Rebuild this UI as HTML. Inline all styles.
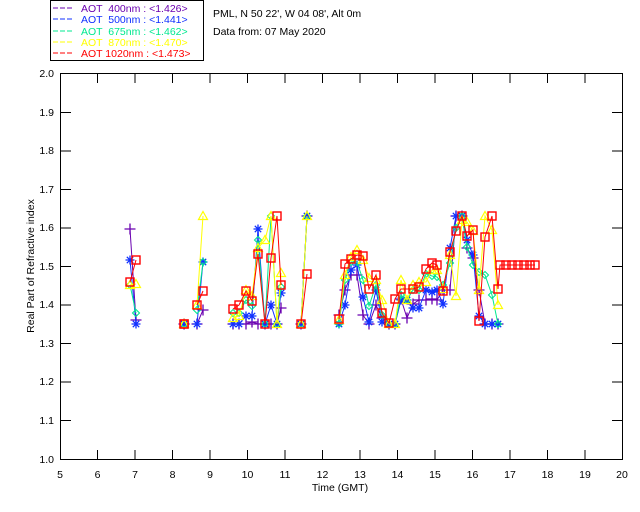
<!DOCTYPE html>
<html><head><meta charset="utf-8"><style>
html,body{margin:0;padding:0;background:#fff;}
svg{display:block;font-family:"Liberation Sans",sans-serif;}
</style></head><body>
<svg width="640" height="512" viewBox="0 0 640 512" xmlns="http://www.w3.org/2000/svg">
<defs>
<marker id="mr" markerUnits="userSpaceOnUse" markerWidth="12" markerHeight="12" refX="6" refY="6" overflow="visible"><rect x="2" y="2" width="8" height="8" fill="none" stroke="#f00" stroke-width="1.4"/></marker>
<marker id="mb" markerUnits="userSpaceOnUse" markerWidth="12" markerHeight="12" refX="6" refY="6" overflow="visible"><path d="M6 1.5V10.5M1.5 6H10.5M2.8 2.8L9.2 9.2M9.2 2.8L2.8 9.2" stroke="#1030ff" stroke-width="1.3"/></marker>
<marker id="mp" markerUnits="userSpaceOnUse" markerWidth="12" markerHeight="12" refX="6" refY="6" overflow="visible"><path d="M6 0.5V11.5M0.5 6H11.5" stroke="#6a00b0" stroke-width="1.3"/></marker>
<marker id="mg" markerUnits="userSpaceOnUse" markerWidth="12" markerHeight="12" refX="6" refY="6" overflow="visible"><path d="M6 2.5L9.5 6L6 9.5L2.5 6Z" fill="none" stroke="#00e890" stroke-width="1.1"/></marker>
<marker id="my" markerUnits="userSpaceOnUse" markerWidth="12" markerHeight="12" refX="6" refY="6" overflow="visible"><path d="M6 1.5L10.5 9.5H1.5Z" fill="none" stroke="#ff0" stroke-width="1.2"/></marker>
</defs>

<rect x="50.5" y="0.5" width="153" height="60" fill="#fff" stroke="#000"/>
<g font-size="10.5">
<line x1="53" y1="8" x2="74" y2="8" stroke="#6a00b0" stroke-dasharray="5,2"/><text x="81" y="12" fill="#6a00b0" xml:space="preserve">AOT  400nm : &lt;1.426&gt;</text>
<line x1="53" y1="19" x2="74" y2="19" stroke="#1030ff" stroke-dasharray="5,2"/><text x="81" y="23" fill="#1030ff" xml:space="preserve">AOT  500nm : &lt;1.441&gt;</text>
<line x1="53" y1="31" x2="74" y2="31" stroke="#00e890" stroke-dasharray="5,2"/><text x="81" y="35" fill="#00e890" xml:space="preserve">AOT  675nm : &lt;1.462&gt;</text>
<line x1="53" y1="42" x2="74" y2="42" stroke="#ff0" stroke-dasharray="5,2"/><text x="81" y="46" fill="#ff0" xml:space="preserve">AOT  870nm : &lt;1.470&gt;</text>
<line x1="53" y1="53" x2="74" y2="53" stroke="#f00" stroke-dasharray="5,2"/><text x="81" y="57" fill="#f00" xml:space="preserve">AOT 1020nm : &lt;1.473&gt;</text>
</g>
<text x="213" y="17" font-size="10.5">PML, N 50 22', W 04 08', Alt 0m</text>
<text x="213" y="35" font-size="10.5">Data from: 07 May 2020</text>

<rect x="60.5" y="73.5" width="562" height="386" fill="none" stroke="#000"/>
<g stroke="#000">
<path d="M97.5 460V450M135 460V450M172.5 460V450M210 460V450M247.5 460V450M285 460V450M322.5 460V450M360 460V450M397.5 460V450M435 460V450M472.5 460V450M510 460V450M547.5 460V450M585 460V450"/>
<path d="M97.5 73V83M135 73V83M172.5 73V83M210 73V83M247.5 73V83M285 73V83M322.5 73V83M360 73V83M397.5 73V83M435 73V83M472.5 73V83M510 73V83M547.5 73V83M585 73V83"/>
<path d="M60 112.5H71M60 151H71M60 189.5H71M60 228H71M60 266.5H71M60 305H71M60 343.5H71M60 382H71M60 420.5H71"/>
<path d="M623 112.5H612M623 151H612M623 189.5H612M623 228H612M623 266.5H612M623 305H612M623 343.5H612M623 382H612M623 420.5H612"/>
</g>
<g font-size="10.5" text-anchor="end">
<text x="54" y="77">2.0</text><text x="54" y="116">1.9</text><text x="54" y="154">1.8</text><text x="54" y="193">1.7</text><text x="54" y="231">1.6</text><text x="54" y="270">1.5</text><text x="54" y="308">1.4</text><text x="54" y="347">1.3</text><text x="54" y="385">1.2</text><text x="54" y="424">1.1</text><text x="54" y="463">1.0</text>
</g>
<g font-size="10.5" text-anchor="middle">
<text x="60" y="478">5</text><text x="97.5" y="478">6</text><text x="135" y="478">7</text><text x="172.5" y="478">8</text><text x="210" y="478">9</text><text x="247.5" y="478">10</text><text x="285" y="478">11</text><text x="322.5" y="478">12</text><text x="360" y="478">13</text><text x="397.5" y="478">14</text><text x="435" y="478">15</text><text x="472.5" y="478">16</text><text x="510" y="478">17</text><text x="547.5" y="478">18</text><text x="585" y="478">19</text><text x="622" y="478">20</text>
<text x="340" y="491">Time (GMT)</text>
<text transform="translate(34,266) rotate(-90)">Real Part of Refractive index</text>
</g>

<g fill="none" stroke-width="1">
<g stroke="#6a00b0" marker-start="url(#mp)" marker-mid="url(#mp)" marker-end="url(#mp)">
<polyline points="130,229 136,320"/><polyline points="184,324 184.1,324"/><polyline points="197,324 203,310"/>
<polyline points="233,324 239,324 246,324 252,322 258,324 265,324 271,324 277,324 281,308"/><polyline points="301,324 307,216"/>
<polyline points="339,315 345,290 351,275 357,275 363,315 369,324 376,305 382,318 389,324 395,324 401,299 407,318 413,304 419,300 426,300 432,299 437,300 443,290 450,290 456,216 462,216 467,248 473,258 479,290 485,324 492,324 498,324"/>
</g>
<g stroke="#1030ff" marker-start="url(#mb)" marker-mid="url(#mb)" marker-end="url(#mb)">
<polyline points="130,260 136,324"/><polyline points="184,324 184.1,324"/><polyline points="197,324 203,262"/>
<polyline points="233,324 239,324 246,316 252,316 258,229 265,324 271,305 277,324 281,293"/><polyline points="301,324 307,216"/>
<polyline points="339,324 345,305 351,270 357,265 363,297 369,322 376,290 382,322 389,324 395,324 401,300 407,300 413,308 419,308 426,290 432,292 437,290 443,304 450,248 456,216 462,216 467,240 473,255 479,316 485,324 492,324 498,324"/>
</g>
<g stroke="#00e890" marker-start="url(#mg)" marker-mid="url(#mg)" marker-end="url(#mg)">
<polyline points="130,285 136,313"/><polyline points="184,324 184.1,324"/><polyline points="197,310 203,262"/>
<polyline points="233,313 239,313 246,300 252,306 258,240 265,324 271,216 277,324 281,287"/><polyline points="301,324 307,216"/>
<polyline points="339,324 345,280 351,262 357,262 363,280 369,306 376,285 382,315 389,324 395,324 401,295 407,300 413,290 419,290 426,274 432,276 437,277 443,285 450,263 456,228 462,216 467,247 473,265 479,272 485,275 492,295 498,324"/>
</g>
<g stroke="#ff0" marker-start="url(#my)" marker-mid="url(#my)" marker-end="url(#my)">
<polyline points="130,285 136,284"/><polyline points="184,324 184.1,324"/><polyline points="197,305 203,216"/>
<polyline points="233,318 239,316 246,290 252,296 258,248 265,240 271,216 277,324 281,273"/><polyline points="301,324 307,216"/>
<polyline points="339,320 345,275 351,257 357,250 363,260 369,278 376,280 382,300 389,324 395,324 401,280 407,300 413,285 419,282 426,282 432,270 437,270 443,289 450,255 456,296 462,220 467,222 473,231 479,290 485,216 492,230 498,305"/>
</g>
<g stroke="#f00" marker-start="url(#mr)" marker-mid="url(#mr)" marker-end="url(#mr)">
<polyline points="130,282 136,260"/><polyline points="184,324 184.1,324"/><polyline points="197,305 203,291"/>
<polyline points="233,309 239,305 246,291 252,301 258,254 265,324 271,258 277,216 281,285"/><polyline points="301,324 307,274"/>
<polyline points="339,319 345,264 351,259 357,255 363,256 369,289 376,275 382,313 389,323 395,299 401,289 413,289 419,287 426,269 432,263 437,265 443,291 450,252 456,231 462,216 467,236 473,230 479,321 485,237 492,216 498,289 500,265 506,265 512,265 518,265 524,265 530,265 535,265"/>
</g>
</g>
</svg>
</body></html>
